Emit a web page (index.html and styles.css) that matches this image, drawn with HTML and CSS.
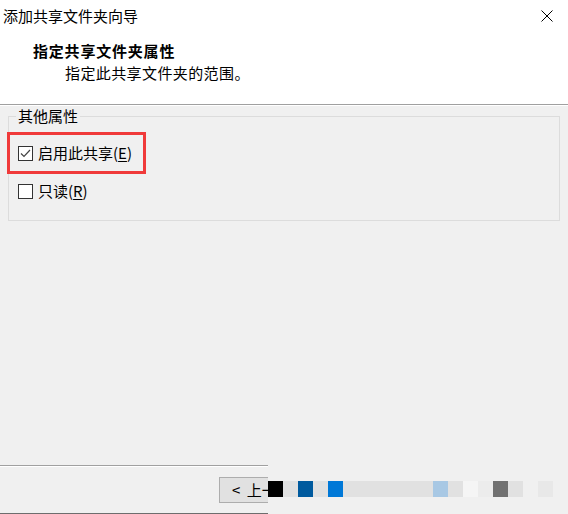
FILE: index.html
```html
<!DOCTYPE html>
<html lang="zh-CN">
<head>
<meta charset="utf-8">
<title>添加共享文件夹向导</title>
<link rel="stylesheet" href="styles.css">
</head>
<body>
<div class="window">
  <div class="top">
    <div class="titlebar">
      <span class="title">添加共享文件夹向导</span>
      <svg class="close" width="12" height="12" viewBox="0 0 12 12"><path d="M0.5 0.5 L11.5 11.5 M11.5 0.5 L0.5 11.5" stroke="#000" stroke-width="1" fill="none"/></svg>
    </div>
    <div class="header">
      <div class="heading">指定共享文件夹属性</div>
      <div class="sub">指定此共享文件夹的范围。</div>
    </div>
  </div>
  <div class="body">
    <fieldset class="group">
      <legend class="legend">其他属性</legend>
      <div class="highlight">
        <label class="check">
          <span class="box"><svg width="13" height="13" viewBox="0 0 13 13"><path d="M2 6.5 L5 9.5 L11 3" stroke="#444" stroke-width="1.2" fill="none"/></svg></span>
          <span class="label">启用此共享(<u>E</u>)</span>
        </label>
      </div>
      <label class="check row2">
        <span class="box"></span>
        <span class="label">只读(<u>R</u>)</span>
      </label>
    </fieldset>
  </div>
  <div class="footer">
    <button class="btn">&lt; 上一步(<u>B</u>)</button>
  </div>
  <div class="glitch">
    <span class="k"></span><span class="g"></span><span class="db"></span><span class="g"></span><span class="b"></span><span class="g wide"></span><span class="lb"></span><span class="g"></span><span class="w"></span><span class="l"></span><span class="dg"></span><span class="g"></span><span class="bg"></span><span class="m"></span>
  </div>
</div>
</body>
</html>
```
FILE: styles.css
```css
* { box-sizing: border-box; }
html, body { margin: 0; padding: 0; }
body {
  width: 568px;
  height: 514px;
  overflow: hidden;
  background: #f0f0f0;
  color: #000;
  font-family: "Noto Sans CJK SC", "Microsoft YaHei", sans-serif;
  font-size: 15px;
  line-height: 20px;
}
.window {
  position: relative;
  height: 514px;
  display: flex;
  flex-direction: column;
}
.top {
  background: #fff;
  height: 105px;
  border-bottom: 1px solid #a0a0a0;
  flex: none;
}
.titlebar {
  height: 32px;
  display: flex;
  align-items: center;
  justify-content: space-between;
  padding: 0 15px 0 3px;
}
.close { display: block; }
.header { padding: 9px 0 0 33px; }
.heading { font-weight: 700; line-height: 20px; letter-spacing: 0.8px; }
.sub { padding-left: 32px; line-height: 21px; padding-top: 1px; letter-spacing: 0.4px; }
.body {
  flex: 1;
  border-top: 1px solid #fff;
  padding-left: 8px;
}
.group {
  margin: 1px 0 0 0;
  width: 552px;
  min-width: 0;
  padding: 0 0 19px 0;
  border: 1px solid #dcdcdc;
}
.legend {
  margin-left: 7px;
  padding: 0 2px;
  line-height: 18px;
}
.highlight {
  margin: 7px 0 0 -2px;
  width: 139px;
  height: 42px;
  border: 3px solid #f03a3a;
  display: flex;
  align-items: center;
  padding-left: 8px;
}
.check {
  display: flex;
  align-items: center;
  gap: 5px;
  height: 20px;
}
.box {
  width: 15px;
  height: 15px;
  border: 1px solid #333;
  background: #fff;
  display: block;
}
.box svg { display: block; }
.row2 { margin-top: 7px; padding-left: 9px; }
.label u { text-underline-offset: 2px; }
.footer {
  flex: none;
  height: 49px;
  border-top: 1px solid #a0a0a0;
  border-bottom: 1px solid #6d6d6d;
  box-shadow: inset 0 1px #fff;
  padding: 11px 0 0 219px;
}
.btn {
  display: block;
  height: 26px;
  width: 94px;
  border: 1px solid #adadad;
  background: #e1e1e1;
  font: inherit;
  line-height: 24px;
  color: #000;
  padding: 0 0 0 12px;
  text-align: left;
  word-spacing: 3px;
}
.glitch {
  position: absolute;
  left: 268px;
  top: 440px;
  right: 0;
  bottom: 0;
  background: #f0f0f0;
  padding-top: 41px;
  display: flex;
  align-items: flex-start;
}
.glitch span { width: 15px; height: 16px; display: block; }
.glitch .wide { width: 90px; }
.k { background: #000; }
.g { background: #e1e1e1; }
.db { background: #005a9e; }
.b { background: #0078d7; }
.lb { background: #a8c8e4; }
.w { background: #f5f5f5; }
.l { background: #ececec; }
.dg { background: #717171; }
.bg { background: #f0f0f0; }
.m { background: #e8e8e8; }
```
